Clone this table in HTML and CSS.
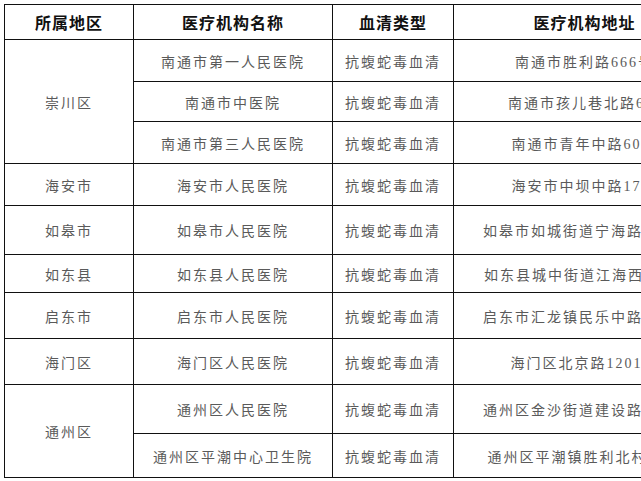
FILE: index.html
```html
<!DOCTYPE html>
<html lang="zh">
<head>
<meta charset="utf-8">
<link rel="stylesheet" href="styles.css">
</head>
<body>
<table class="sheet">
  <colgroup>
    <col class="c1"><col class="c2"><col class="c3"><col class="c4">
  </colgroup>
  <thead>
    <tr class="h0"><th>所属地区</th><th>医疗机构名称</th><th>血清类型</th><th>医疗机构地址</th></tr>
  </thead>
  <tbody>
    <tr class="r1"><td rowspan="3">崇川区</td><td>南通市第一人民医院</td><td>抗蝮蛇毒血清</td><td>南通市胜利路666号</td></tr>
    <tr class="r2"><td>南通市中医院</td><td>抗蝮蛇毒血清</td><td>南通市孩儿巷北路6号</td></tr>
    <tr class="r3"><td>南通市第三人民医院</td><td>抗蝮蛇毒血清</td><td>南通市青年中路60号</td></tr>
    <tr class="r4"><td>海安市</td><td>海安市人民医院</td><td>抗蝮蛇毒血清</td><td>海安市中坝中路17号</td></tr>
    <tr class="r5"><td>如皋市</td><td>如皋市人民医院</td><td>抗蝮蛇毒血清</td><td>如皋市如城街道宁海路136号</td></tr>
    <tr class="r6"><td>如东县</td><td>如东县人民医院</td><td>抗蝮蛇毒血清</td><td>如东县城中街道江海西路3号</td></tr>
    <tr class="r7"><td>启东市</td><td>启东市人民医院</td><td>抗蝮蛇毒血清</td><td>启东市汇龙镇民乐中路527号</td></tr>
    <tr class="r8"><td>海门区</td><td>海门区人民医院</td><td>抗蝮蛇毒血清</td><td>海门区北京路1201号</td></tr>
    <tr class="r9"><td rowspan="2">通州区</td><td>通州区人民医院</td><td>抗蝮蛇毒血清</td><td>通州区金沙街道建设路168号</td></tr>
    <tr class="r10"><td>通州区平潮中心卫生院</td><td>抗蝮蛇毒血清</td><td>通州区平潮镇胜利北村18号</td></tr>
  </tbody>
</table>
</body>
</html>
```
FILE: styles.css
```css
html, body {
  margin: 0;
  padding: 0;
  background: #ffffff;
  overflow: hidden;
  width: 641px;
  height: 481px;
}
body {
  padding: 4px 0 0 4px;
  box-sizing: border-box;
}
.sheet {
  border-collapse: collapse;
  table-layout: fixed;
  width: 711px;
  font-family: "Liberation Serif", "Noto Sans CJK SC", serif;
}
.c1 { width: 129px; }
.c2 { width: 199px; }
.c3 { width: 121px; }
.c4 { width: 262px; }
.sheet th, .sheet td {
  border: 1px solid #111;
  padding: 0;
  text-align: center;
  vertical-align: middle;
  white-space: nowrap;
  overflow: hidden;
}
.sheet th {
  font-family: "Noto Sans CJK SC", sans-serif;
  font-weight: bold;
  font-size: 16px;
  letter-spacing: 1px;
  color: #111;
}
.sheet td {
  font-size: 14px;
  letter-spacing: 2px;
  color: #5a5a5a;
}
.h0 { height: 35px; }
.r1 { height: 42px; }
.r2 { height: 40px; }
.r3 { height: 42px; }
.r4 { height: 42px; }
.r5 { height: 49px; }
.r6 { height: 38px; }
.r7 { height: 46px; }
.r8 { height: 46px; }
.r9 { height: 49px; }
.r10 { height: 44px; }
```
